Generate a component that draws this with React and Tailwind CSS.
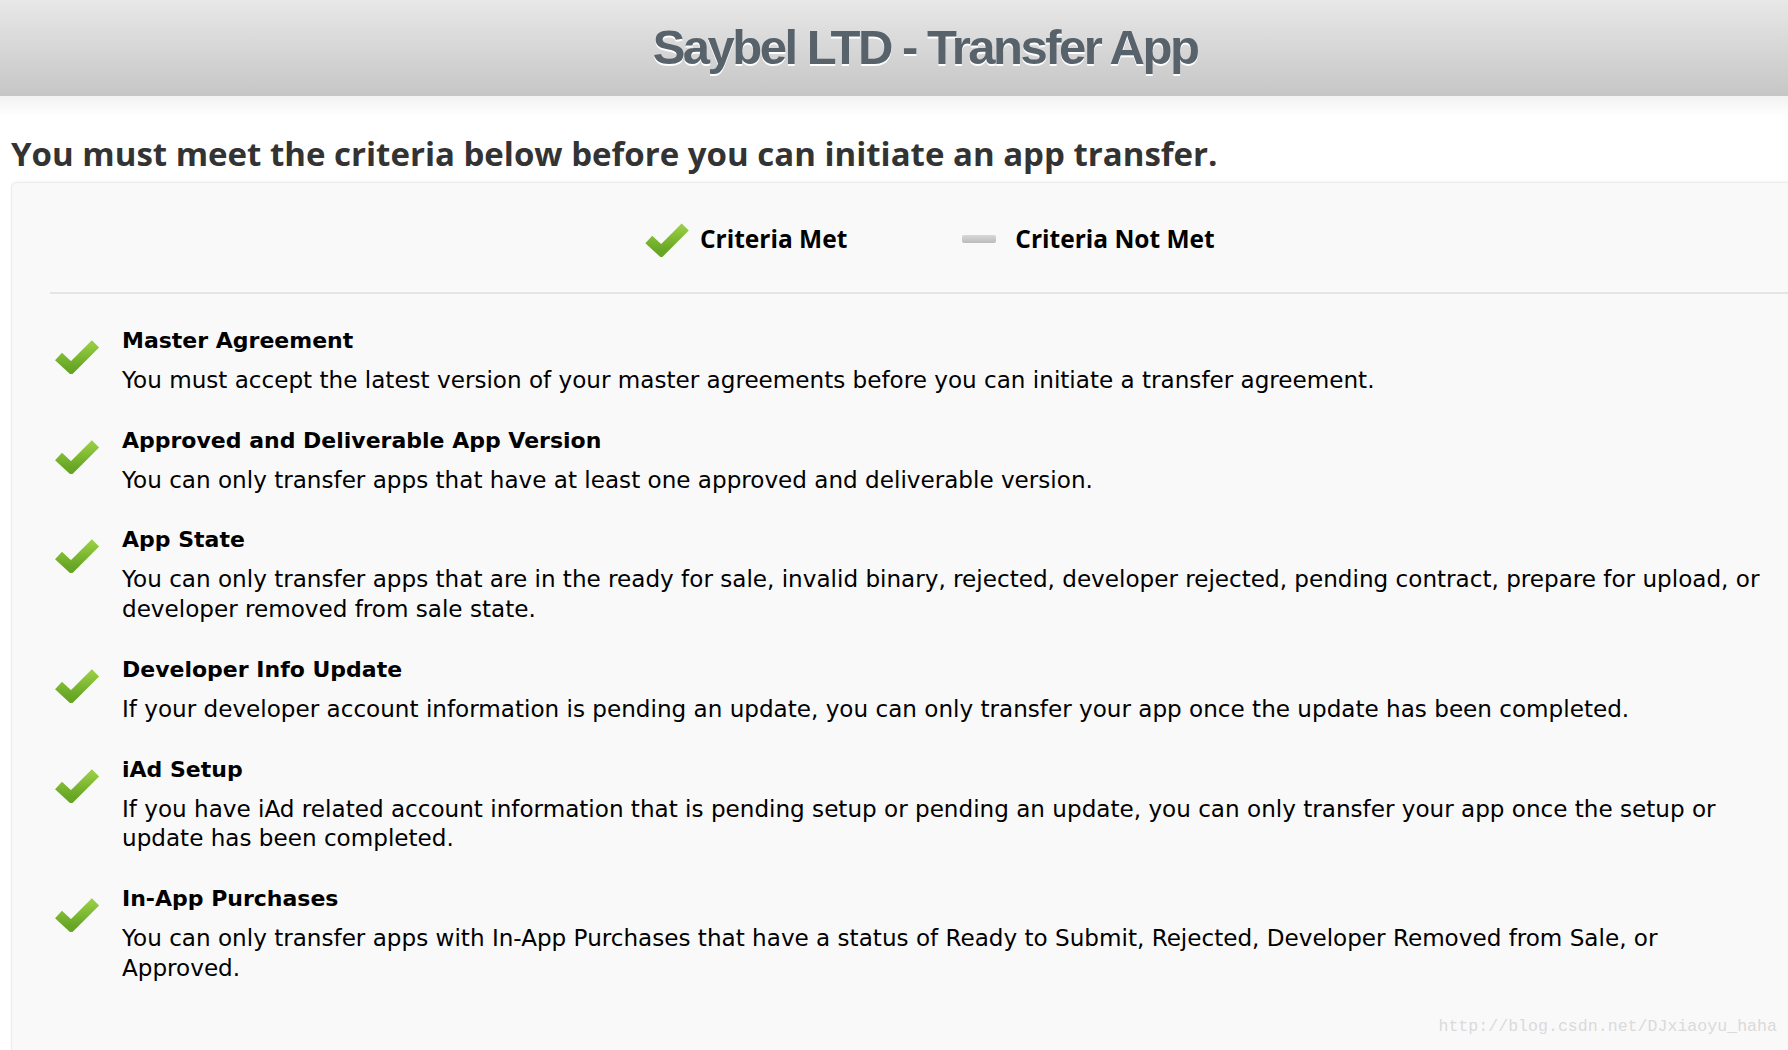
import React from "react";

const CRITERIA = [
  {
    title: "Master Agreement",
    text: "You must accept the latest version of your master agreements before you can initiate a transfer agreement.",
  },
  {
    title: "Approved and Deliverable App Version",
    text: "You can only transfer apps that have at least one approved and deliverable version.",
  },
  {
    title: "App State",
    text: "You can only transfer apps that are in the ready for sale, invalid binary, rejected, developer rejected, pending contract, prepare for upload, or developer removed from sale state.",
  },
  {
    title: "Developer Info Update",
    text: "If your developer account information is pending an update, you can only transfer your app once the update has been completed.",
  },
  {
    title: "iAd Setup",
    text: "If you have iAd related account information that is pending setup or pending an update, you can only transfer your app once the setup or update has been completed.",
  },
  {
    title: "In-App Purchases",
    text: "You can only transfer apps with In-App Purchases that have a status of Ready to Submit, Rejected, Developer Removed from Sale, or Approved.",
  },
];

function Check({ className }) {
  return (
    <svg viewBox="0 0 48 37" className={className}>
      <defs>
        <linearGradient id="checkGreen" x1="0" y1="0" x2="0" y2="1">
          <stop offset="0" stopColor="#96cd42" />
          <stop offset="1" stopColor="#67a524" />
        </linearGradient>
      </defs>
      <polyline
        points="5,19 18,31 43,6"
        fill="none"
        stroke="url(#checkGreen)"
        strokeWidth="10.5"
      />
    </svg>
  );
}

export default function App() {
  return (
    <div className="relative min-h-[1050px] overflow-hidden bg-white">
      <header className="flex h-[96px] items-center justify-center bg-gradient-to-b from-[#e8e8e8] to-[#c6c6c6] pl-[62px]">
        <h1 className="font-['Liberation_Sans',Arial,sans-serif] text-[49px] font-bold tracking-[-2.5px] text-[#58626b] [text-shadow:0_2px_0_#fff]">
          Saybel LTD - Transfer App
        </h1>
      </header>
      <div className="h-[20px] bg-gradient-to-b from-[#f2f2f2] to-white" />

      <h2 className="mt-[16px] pl-[11px] font-['Open_Sans',sans-serif] text-[33px] leading-[44px] font-bold text-[#333] font-stretch-[88%]">
        You must meet the criteria below before you can initiate an app transfer.
      </h2>

      <section className="mt-[6px] ml-[11px] min-h-[868px] rounded-tl-[6px] border-t border-l border-[#ececec] bg-[#f9f9f9] pl-[38px] shadow-[0_-1px_3px_rgba(0,0,0,0.04)]">
        <div className="mt-[38px] flex h-[36px] items-center pl-[594px] font-['Open_Sans',sans-serif] text-[24.5px] font-bold text-black font-stretch-[88%]">
          <Check className="h-[36px] w-[46px]" />
          <span className="ml-[10px]">Criteria Met</span>
          <span className="ml-[115px] h-[8px] w-[34px] rounded-[2px] bg-gradient-to-b from-[#d8d8d8] to-[#bcbcbc]" />
          <span className="ml-[19px]">Criteria Not Met</span>
        </div>

        <div className="mt-[35px] border-t-2 border-[#e5e5e5]" />

        <ul className="mt-[32px] flex flex-col gap-[30px] pr-[26px] pl-[3px] font-['DejaVu_Sans',Verdana,sans-serif] text-black">
          {CRITERIA.map((c) => (
            <li key={c.title} className="flex">
              <div className="w-[69px] shrink-0 pt-[12px]">
                <Check className="h-[36px] w-[48px]" />
              </div>
              <div>
                <p className="text-[22px] leading-[30px] font-bold">{c.title}</p>
                <p className="mt-[10px] text-[23.1px] leading-[29.7px]">{c.text}</p>
              </div>
            </li>
          ))}
        </ul>
      </section>

      <div className="absolute right-[11px] bottom-[10px] font-['Liberation_Mono',monospace] text-[16.6px] text-[#dadada]">
        http://blog.csdn.net/DJxiaoyu_haha
      </div>
    </div>
  );
}
